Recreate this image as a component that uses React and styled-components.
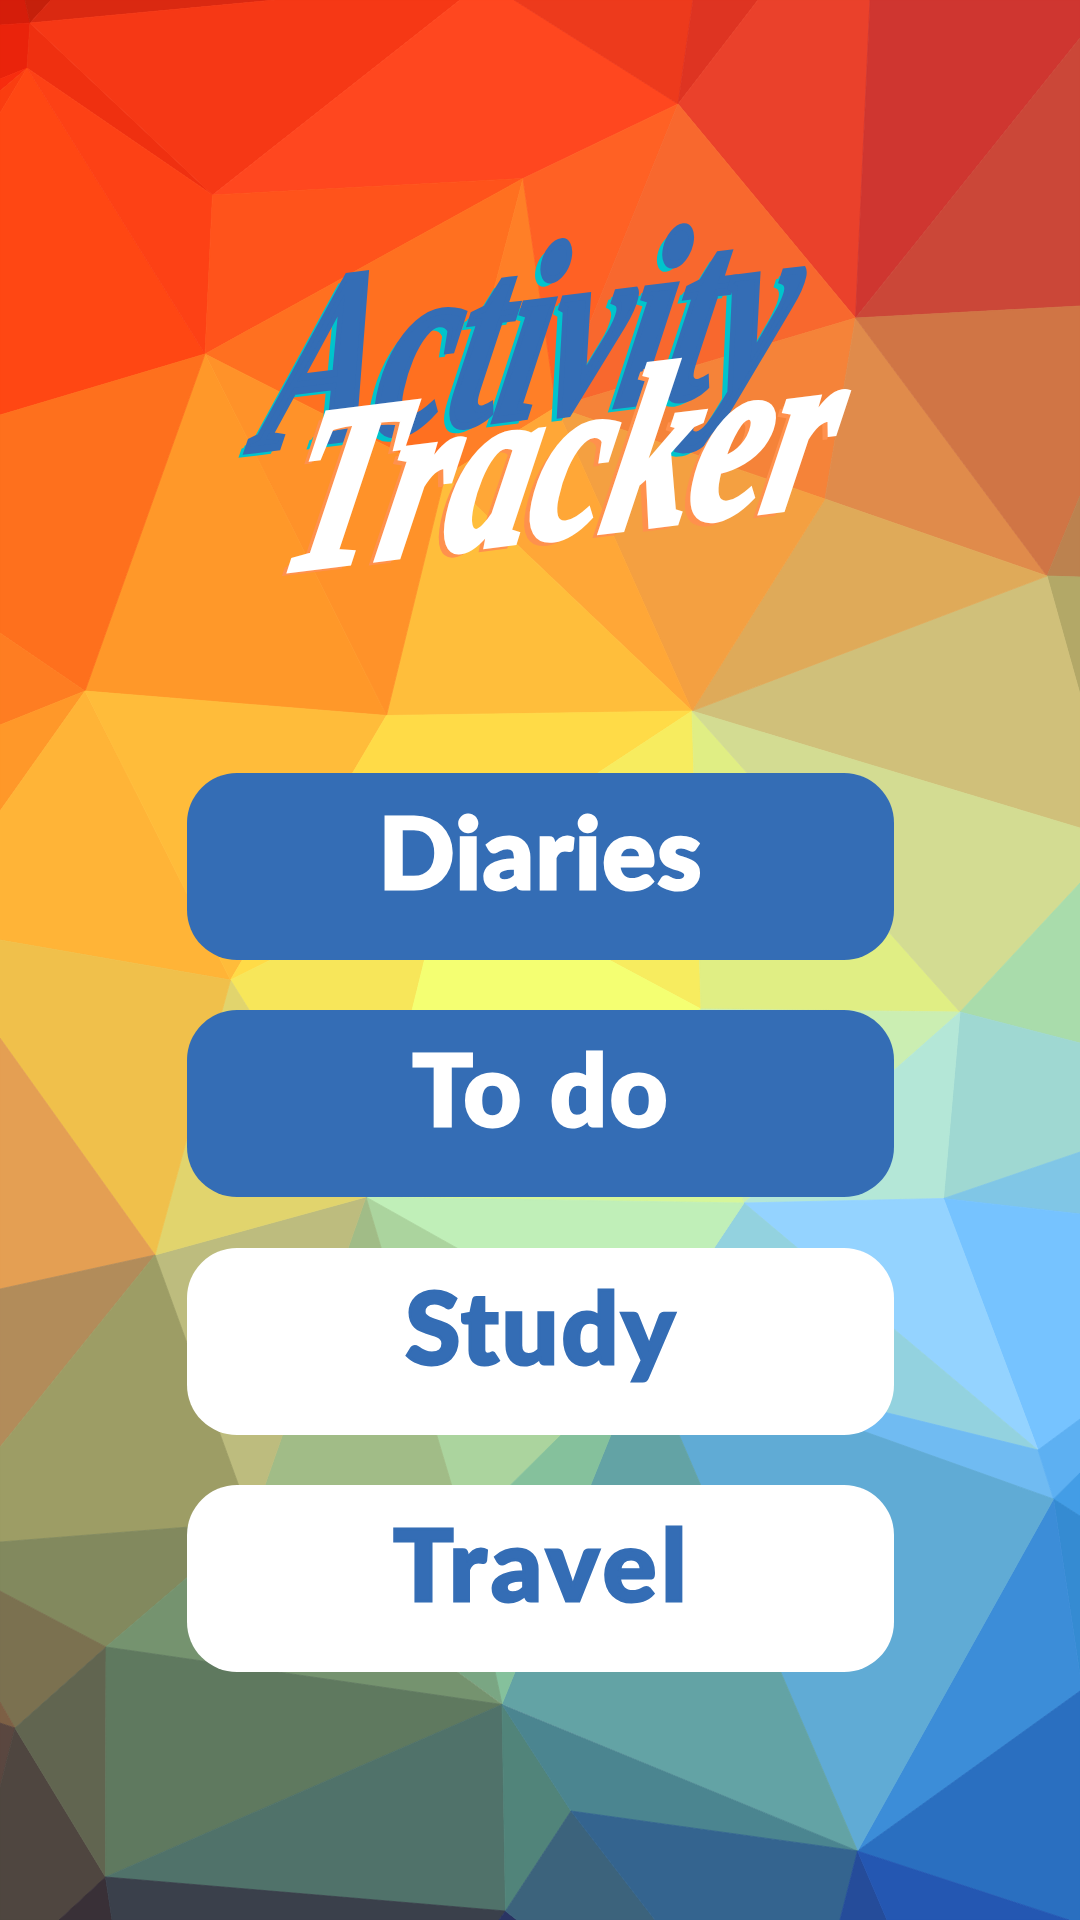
import React from "react";
import styled, { createGlobalStyle } from "styled-components";

const Global = createGlobalStyle`
  *, *::before, *::after { box-sizing: border-box; }
  body { margin: 0; background: #fff; }
`;

const BLUE = "#346db5";

const facets = [
  ["0,0 25,0 30,23 0,25", "#d51d0a"],
  ["25,0 51,0 30,23", "#c5200b"],
  ["51,0 275,0 30,23", "#da2911"],
  ["0,25 30,23 27,68 0,79", "#ea230b"],
  ["0,79 27,68 0,91", "#f72c0e"],
  ["0,91 27,68 0,113", "#fa3d10"],
  ["30,23 27,68 212.5,195", "#ef3010"],
  ["30,23 275,0 460,0 212.5,195", "#f63815"],
  ["0,113 27,68 205,354 0,415", "#ff4713"],
  ["27,68 212.5,195 205,354", "#fd4115"],
  ["212.5,195 460,0 514,0 678,104 523,178.5", "#ff471f"],
  ["212.5,195 523,178.5 205,354", "#ff531b"],
  ["514,0 693,0 678,104", "#ed3a1c"],
  ["693,0 758,0 678,104", "#de3422"],
  ["758,0 870,0 855.5,318 678,104", "#ea412b"],
  ["870,0 1080,0 1080,38 855.5,318", "#cf3630"],
  ["1080,38 1080,306 855.5,318", "#cb4738"],
  ["205,354 523,178.5 445,476", "#ff7020"],
  ["523,178.5 556,407 445,476", "#ff7f27"],
  ["523,178.5 678,104 556,407", "#ff6124"],
  ["678,104 855.5,318 556,407", "#f8682e"],
  ["556,407 855.5,318 825,499", "#f58339"],
  ["855.5,318 1047,576 825,499", "#e08b4b"],
  ["855.5,318 1080,306 1080,496 1047,576", "#d07545"],
  ["1047,576 1080,496 1080,577", "#bc824f"],
  ["1047,576 1080,577 1080,694", "#b3a867"],
  ["692,711 1047,576 1080,694 1080,828", "#d0c07a"],
  ["825,499 1047,576 692,711", "#dfaa59"],
  ["556,407 825,499 692,711", "#f4a041"],
  ["445,476 556,407 692,711", "#ffa737"],
  ["445,476 692,711 386.5,715.5", "#ffbe3b"],
  ["205,354 445,476 386.5,715.5", "#ff9229"],
  ["205,354 386.5,715.5 85,691", "#ff9829"],
  ["0,415 205,354 85,691 0,633", "#fe701d"],
  ["0,633 85,691 0,725", "#fe7d22"],
  ["0,725 85,691 0,811", "#ff9829"],
  ["0,811 85,691 230.5,980 0,940", "#ffb437"],
  ["85,691 386.5,715.5 230.5,980", "#ffbc3a"],
  ["386.5,715.5 692,711 446,873 230.5,980", "#ffdb47"],
  ["446,873 692,711 701,1009", "#f7ec5f"],
  ["230.5,980 446,873 366,1197", "#f7e65a"],
  ["446,873 701,1009 366,1197", "#f4ff72"],
  ["701,1009 744,1203 366,1197", "#d6f69a"],
  ["692,711 960,1012 701,1009", "#e0ee84"],
  ["692,711 1080,828 1080,883 960,1012", "#d3dc92"],
  ["960,1012 1080,883 1080,1043", "#a9dcab"],
  ["960,1012 1080,1043 1080,1152 943.5,1198.5", "#9fd8d2"],
  ["701,1009 960,1012 744,1203", "#cbeeb2"],
  ["960,1012 943.5,1198.5 744,1203", "#b4e7d7"],
  ["943.5,1198.5 1080,1152 1080,1214", "#80c6e6"],
  ["943.5,1198.5 1080,1214 1080,1419 1038,1450", "#76c3ff"],
  ["744,1203 943.5,1198.5 1038,1450", "#94d3ff"],
  ["744,1203 1038,1450 644,1353", "#93d2df"],
  ["644,1353 1038,1450 1053.5,1499", "#70bbf2"],
  ["1038,1450 1080,1419 1080,1473 1053.5,1499", "#5db0f2"],
  ["1053.5,1499 1080,1473 1080,1516", "#439de6"],
  ["1053.5,1499 1080,1516 1080,1675", "#358bd2"],
  ["1053.5,1499 1080,1675 1080,1691 857.5,1851", "#3c8dd8"],
  ["857.5,1851 1080,1691 1080,1920 1069,1920", "#2a6fc0"],
  ["644,1353 1053.5,1499 857.5,1851", "#60abd5"],
  ["644,1353 857.5,1851 502,1704", "#63a3a5"],
  ["366,1197 744,1203 644,1353", "#c0efb8"],
  ["366,1197 644,1353 465,1530", "#abd49e"],
  ["465,1530 644,1353 502,1704", "#85c19c"],
  ["366,1197 465,1530 252,1522", "#a1bc87"],
  ["252,1522 465,1530 502,1704", "#7aa683"],
  ["155,1255 366,1197 252,1522", "#bdbc7e"],
  ["230.5,980 366,1197 155,1255", "#e1d46d"],
  ["0,940 230.5,980 155,1255 0,1038", "#f0c04b"],
  ["0,1038 155,1255 0,1289", "#e49f53"],
  ["0,1289 155,1255 0,1447", "#b28c5a"],
  ["0,1447 155,1255 252,1522 0,1542", "#9d9d65"],
  ["0,1542 252,1522 106,1647 0,1591", "#82895e"],
  ["252,1522 502,1704.5 106,1647", "#75936f"],
  ["0,1591 106,1647 15,1728 0,1702", "#7b7150"],
  ["0,1702 15,1728 0,1723", "#7d6045"],
  ["0,1723 15,1728 0,1787", "#5a4740"],
  ["15,1728 105.5,1877 59,1920 0,1920 0,1787", "#4f4640"],
  ["15,1728 106,1647 105.5,1877", "#616550"],
  ["106,1647 502,1704.5 105.5,1877", "#5f795f"],
  ["502,1704.5 505.5,1911 105.5,1877", "#50726a"],
  ["105.5,1877 112,1920 59,1920", "#393037"],
  ["105.5,1877 505.5,1911 499,1920 112,1920", "#3a404b"],
  ["505.5,1911 517,1920 499,1920", "#2a3463"],
  ["502,1704.5 571,1811 505.5,1911", "#51847a"],
  ["502,1704.5 857.5,1851 571,1811", "#4b8590"],
  ["571,1811 655,1920 517,1920 505.5,1911", "#3c637c"],
  ["571,1811 857.5,1851 840,1920 655,1920", "#34648f"],
  ["857.5,1851 887,1920 840,1920", "#254c9a"],
  ["857.5,1851 1069,1920 887,1920", "#2457b2"],
];

const Screen = styled.div`
  display: grid;
  width: 1080px;
  height: 1920px;
  overflow: hidden;
`;

const Backdrop = styled.svg`
  grid-area: 1 / 1;
  display: block;
`;

const Page = styled.main`
  grid-area: 1 / 1;
  z-index: 1;
  display: flex;
  flex-direction: column;
  align-items: center;
`;

const Title = styled.h1`
  margin: 0;
  width: 1080px;
  height: 773px;
  padding-top: 319px;
  font: italic 700 203px/122px "Liberation Serif", "Times New Roman", serif;
`;

const Word = styled.span`
  display: block;
  width: max-content;
  margin-left: ${(p) => p.$indent}px;
  color: ${(p) => p.$color};
  text-shadow: -5px 3px 0 ${(p) => p.$shadow}, -8px 5px 0 ${(p) => p.$shadow};
  -webkit-text-stroke: 6px ${(p) => p.$color};
  transform: rotate(-7deg) skewX(-19deg) scale(${(p) => p.$stretch}, ${(p) => p.$rise});
  transform-origin: left bottom;
`;

const Menu = styled.nav`
  display: flex;
  flex-direction: column;
  gap: 50.4px;
`;

const MenuButton = styled.button`
  display: flex;
  justify-content: center;
  align-items: center;
  width: 707px;
  height: 187px;
  padding: 0 0 33px;
  border: 0;
  border-radius: 50px;
  background: ${(p) => (p.$filled ? BLUE : "#fff")};
  color: ${(p) => (p.$filled ? "#fff" : BLUE)};
`;

const Label = styled.span`
  font: 900 100px/1 Lato, sans-serif;
  letter-spacing: ${(p) => p.$tracking}px;
  margin-right: -${(p) => p.$tracking}px;
  -webkit-text-stroke: 3px currentColor;
`;

const items = [
  { label: "Diaries", filled: true, tracking: 1.5 },
  { label: "To do", filled: true, tracking: 2.5 },
  { label: "Study", filled: false, tracking: 3 },
  { label: "Travel", filled: false, tracking: 5 },
];

export default function App() {
  return (
    <>
      <Global />
      <Screen>
        <Backdrop width="1080" height="1920" viewBox="0 0 1080 1920" aria-hidden="true">
          {facets.map(([points, color]) => (
            <polygon key={points} points={points} fill={color} stroke={color} strokeWidth="0.8" />
          ))}
        </Backdrop>
        <Page>
          <Title>
            <Word $indent={257} $color={BLUE} $shadow="#00c4cc" $stretch={0.838} $rise={1.2}>
              Activity
            </Word>
            <Word $indent={278} $color="#fff" $shadow="#ff914d" $stretch={0.838} $rise={1.13}>
              Tracker
            </Word>
          </Title>
          <Menu>
            {items.map((item) => (
              <MenuButton key={item.label} type="button" $filled={item.filled}>
                <Label $tracking={item.tracking}>{item.label}</Label>
              </MenuButton>
            ))}
          </Menu>
        </Page>
      </Screen>
    </>
  );
}
